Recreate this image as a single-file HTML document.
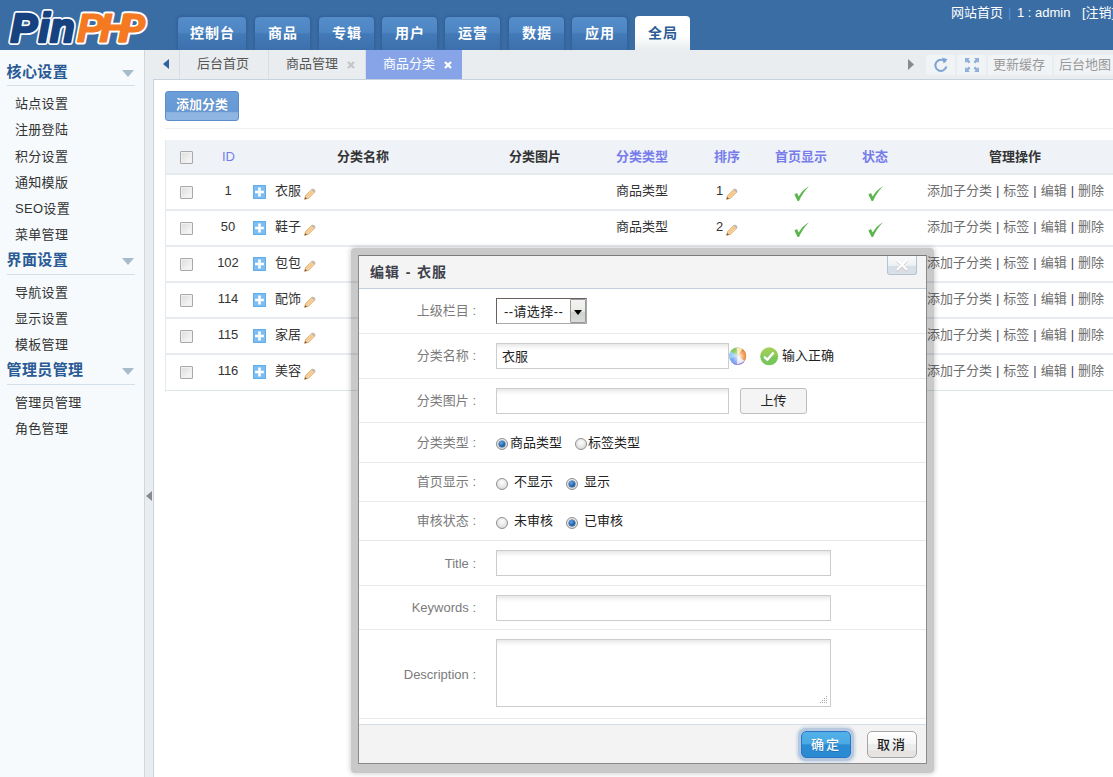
<!DOCTYPE html>
<html lang="zh-CN">
<head>
<meta charset="utf-8">
<title>PinPHP 管理后台</title>
<style>
*{box-sizing:border-box;margin:0;padding:0}
html,body{width:1113px;height:777px;overflow:hidden;background:#fff}
body{font-family:"Liberation Sans","Noto Sans CJK SC",sans-serif;font-size:13px;color:#333;position:relative}
.abs{position:absolute}
/* header */
#header{position:absolute;left:0;top:0;width:1113px;height:50px;background:#3a6da4}
#logo{position:absolute;left:0;top:0;width:160px;height:50px}
.nav{position:absolute;top:17px;height:33px;border-radius:4px 4px 0 0;background:linear-gradient(#548dca 0,#4e86c4 46%,#4279b7 52%,#3c70ad 100%);color:#fff;font-weight:bold;font-size:14px;letter-spacing:1px;padding-left:1px;line-height:33px;text-align:center;box-shadow:0 0 0 1px #34629c,0 0 3px 1px #2f5c95}
.nav.on{background:linear-gradient(#fff 0,#fff 55%,#e9edef 100%);color:#2b5b95;box-shadow:none;top:16px;height:34px;line-height:35px}
#topr{position:absolute;top:5px;left:951px;color:#fff;font-size:13px;line-height:16px;white-space:nowrap}
/* sidebar */
#side{position:absolute;left:0;top:50px;width:144px;height:727px;background:#f6fafc}
.sh{position:absolute;left:7px;width:128px;height:25px;border-bottom:1px solid #d5dfe8;color:#2a5a95;font-weight:bold;font-size:15px;line-height:22px;letter-spacing:.4px;text-indent:-.5px}
.sh i{position:absolute;right:1px;top:9px;width:0;height:0;border:6px solid transparent;border-top:7px solid #a6bcc8;border-bottom:0}
.si{position:absolute;left:15px;font-size:13px;line-height:18px;color:#333;white-space:nowrap;letter-spacing:.3px}
#split{position:absolute;left:144px;top:50px;width:10px;height:727px;background:#e9edef;border-left:1px solid #d2d7db;border-right:1px solid #c6d5e4}
#split i{position:absolute;left:1px;top:441px;width:0;height:0;border:5px solid transparent;border-right:6px solid #8a8a8a;border-left:0}
/* tabbar */
#tabbar{position:absolute;left:153px;top:50px;width:960px;height:30px;background:#e9edef;border-bottom:1px solid #c5d3e0}
.tb{position:absolute;top:0;height:29px;line-height:28px;font-size:13px;color:#555;border-right:1px solid #d7dee5;white-space:nowrap}
.tb.on{background:#86a4e7;color:#fff;border-right:0}

/* content */
#addbtn{position:absolute;left:165px;top:91px;width:74px;height:30px;border-radius:3px;background:linear-gradient(#6c9fd9 0,#6699d5 70%,#8fb5e2 74%,#8fb5e2 100%);border:1px solid #5b8ccb;color:#fff;font-weight:bold;font-size:13px;line-height:25px;text-align:center;text-shadow:0 0 1px #3c6aa8}
#hr1{position:absolute;left:165px;top:128px;width:948px;height:1px;background:#eef1f4}
#tbl{position:absolute;left:165px;top:140px;width:960px;height:252px;border-left:1px solid #e3e8ec}
#th{position:absolute;left:0;top:0;width:960px;height:35px;background:#eff3f8;border-bottom:2px solid #e6eaee}
.hc{position:absolute;top:8px;font-size:13px;line-height:18px;font-weight:bold;color:#333;white-space:nowrap}
.hc.l{color:#777cea}
.tr{position:absolute;left:0;width:960px;height:36px;border-bottom:2px solid #e8ecf0}
.tr>*{position:absolute}
.cb{left:14px;top:11px;width:13px;height:13px;border:1px solid #a9a9a9;border-radius:1px;background:linear-gradient(135deg,#dcdcdc,#fbfbfb);box-shadow:inset 0 0 0 1px #f0f0f0}
.id{left:41px;top:7px;width:42px;text-align:center;line-height:18px;font-size:13px;color:#333}
.pl{left:87px;top:10px}
.nm{left:109px;top:7px;line-height:18px;font-size:13px;white-space:nowrap}
.pc{top:13px}
.ty{left:450px;top:7px;line-height:18px;white-space:nowrap}
.od{left:550px;top:7px;line-height:18px}
.ck{top:11px}
.op{left:761px;top:7px;line-height:18px;color:#4b3f5e;white-space:nowrap;word-spacing:.35px}
.op b{font-weight:normal;color:#6e6e6e}

/* dialog */
#dlgwrap{position:absolute;left:351px;top:248px;width:583px;height:525px;background:rgba(0,0,0,.21);box-shadow:0 0 5px 1px rgba(0,0,0,.18);border-radius:4px}
#dlg{position:absolute;left:358px;top:255px;width:569px;height:509px;background:#fff;border:1px solid #8a8a8a;border-top-color:#7a7a7a}
#dt{position:absolute;left:0;top:0;width:567px;height:33px;background:#f4f4f4;border-bottom:1px solid #c3d1de;font-weight:bold;font-size:14px;letter-spacing:1px;line-height:33px;padding-left:11px;color:#3d414b;word-spacing:.8px}
#dx{position:absolute;left:528px;top:0;width:30px;height:19px;border:1px solid #b3c3d0;border-top:0;border-radius:0 0 3px 3px;background:linear-gradient(#f9f9f9 0,#eef1f4 52%,#d6dee7 58%,#dae1e9 100%)}
.fr{position:absolute;left:0;width:567px;border-bottom:1px solid #e6eaed}
.lb{position:absolute;left:0;width:117px;text-align:right;color:#7b7b7b;font-size:13px;line-height:18px;white-space:nowrap}
.in{position:absolute;left:137px;height:26px;border:1px solid #ccc;background:linear-gradient(#e7e7e7 0,#f5f5f5 3px,#fff 6px);font-size:13px;line-height:26px;padding-left:5px;color:#222}
.rd{position:absolute;width:12px;height:12px;border-radius:50%;border:1px solid #8f8f8f;background:radial-gradient(circle at 50% 35%,#fdfdfd 0,#e4e4e4 60%,#c9c9c9 100%)}
.rd.on:after{content:"";position:absolute;left:2px;top:2px;width:6px;height:6px;border-radius:50%;background:radial-gradient(circle at 40% 35%,#63a8ea 0,#1f62ad 55%,#0f3872 100%);box-shadow:0 0 0 .5px #1a4a88}
.rt{position:absolute;font-size:13px;line-height:18px;color:#222;white-space:nowrap}
#df{position:absolute;left:0;top:468px;width:567px;height:39px;background:#f3f3f3;border-top:1px solid #d5dde5}
.bt{position:absolute;top:6px;width:50px;height:27px;border-radius:5px;font-size:13px;line-height:25px;text-align:center;letter-spacing:2px}

.tl{position:absolute;top:5px;height:20px;background:#f1f4f6;font-size:13px;line-height:19px;color:#999;white-space:nowrap;overflow:hidden}
</style>
</head>
<body>
<div id="header">
  <svg id="logo" viewBox="0 0 160 50">
    <g font-family="Liberation Sans, sans-serif" font-weight="bold" font-style="italic" stroke-linejoin="round">
      <g fill="#fff" stroke="#fff">
        <g font-size="40" stroke-width="6"><text x="10.5" y="42">P</text><text x="38.5" y="42">i</text><text x="50" y="42">n</text></g>
        <g font-size="41" stroke-width="4.8"><text x="76.8" y="42.4">P</text><text transform="translate(99 42.4) scale(1.08 1)">H</text><text x="117.7" y="42.4">P</text></g>
      </g>
      <g fill="#16437f" stroke="#16437f" stroke-width="2.6" font-size="40">
        <text x="10.5" y="42">P</text><text x="38.5" y="42">i</text><text x="50" y="42">n</text>
      </g>
      <g fill="#f47920" stroke="#f47920" stroke-width="1.2" font-size="41">
        <text x="76.8" y="42.4">P</text><text transform="translate(99 42.4) scale(1.08 1)">H</text><text x="117.7" y="42.4">P</text>
      </g>
    </g>
  </svg>
  <div class="nav" style="left:178px;width:68px">控制台</div>
  <div class="nav" style="left:255px;width:55px">商品</div>
  <div class="nav" style="left:319px;width:55px">专辑</div>
  <div class="nav" style="left:382px;width:55px">用户</div>
  <div class="nav" style="left:445px;width:55px">运营</div>
  <div class="nav" style="left:509px;width:55px">数据</div>
  <div class="nav" style="left:572px;width:55px">应用</div>
  <div class="nav on" style="left:635px;width:55px">全局</div>
  <div id="topr"><span class="abs" style="left:0">网站首页</span><span class="abs" style="left:57px;color:#4f8fd6">|</span><span class="abs" style="left:66px">1 : admin</span><span class="abs" style="left:131px">[注销]</span></div>
</div>

<div id="side">
  <div class="sh" style="top:11px">核心设置<i></i></div>
  <div class="si" style="top:45px">站点设置</div>
  <div class="si" style="top:71px">注册登陆</div>
  <div class="si" style="top:98px">积分设置</div>
  <div class="si" style="top:124px">通知模版</div>
  <div class="si" style="top:150px">SEO设置</div>
  <div class="si" style="top:176px">菜单管理</div>
  <div class="sh" style="top:199px;height:26px">界面设置<i></i></div>
  <div class="si" style="top:234px">导航设置</div>
  <div class="si" style="top:260px">显示设置</div>
  <div class="si" style="top:286px">模板管理</div>
  <div class="sh" style="top:309px;height:26px">管理员管理<i></i></div>
  <div class="si" style="top:344px">管理员管理</div>
  <div class="si" style="top:370px">角色管理</div>
</div>
<div id="split"><i></i></div>

<div id="tabbar">
  <svg class="abs" style="left:9px;top:8px" width="8" height="12" viewBox="0 0 8 12"><path d="M7 1 L1 6 L7 11 Z" fill="#2f62a3"/></svg>
  <div class="tb" style="left:0;width:27px"></div>
  <div class="tb" style="left:27px;width:89px;padding-left:17px">后台首页</div>
  <div class="tb" style="left:116px;width:97px;padding-left:17px">商品管理<svg class="abs" style="left:78px;top:11px" width="8" height="8" viewBox="0 0 8 8"><path d="M1 1 L7 7 M7 1 L1 7" stroke="#c3c7cb" stroke-width="2.3"/></svg></div>
  <div class="tb on" style="left:213px;width:96px;padding-left:17px">商品分类<svg class="abs" style="left:78px;top:11px" width="8" height="8" viewBox="0 0 8 8"><path d="M1 1 L7 7 M7 1 L1 7" stroke="#fff" stroke-width="2.3"/></svg></div>
  <svg class="abs" style="left:755px;top:9px" width="6" height="11" viewBox="0 0 6 11"><path d="M0 0 L6 5.5 L0 11 Z" fill="#8a8a8a"/></svg>
  <div class="tl" style="left:773px;width:29px;border-radius:3px 0 0 3px"><svg class="abs" style="left:7px;top:2px" width="16" height="16" viewBox="0 0 16 16"><path d="M12.6 5.2 A5.6 5.6 0 1 0 13.4 9.6" fill="none" stroke="#7fa6d3" stroke-width="2.1"/><path d="M9.2 0.6 L14.6 2.2 L10.6 6.4 Z" fill="#7fa6d3"/></svg></div>
  <div class="tl" style="left:804px;width:29px"><svg class="abs" style="left:8px;top:3px" width="14" height="14" viewBox="0 0 14 14"><g fill="#8fb0d8"><path d="M0 0h5L3.4 1.6 5.5 3.7 3.7 5.5 1.6 3.4 0 5z"/><path d="M14 0v5l-1.6-1.6-2.1 2.1-1.8-1.8 2.1-2.1L9 0z"/><path d="M0 14V9l1.6 1.6 2.1-2.1 1.8 1.8-2.1 2.1L5 14z"/><path d="M14 14H9l1.6-1.6-2.1-2.1 1.8-1.8 2.1 2.1L14 9z"/></g></svg></div>
  <div class="tl" style="left:835px;width:64px;padding-left:5px">更新缓存</div>
  <div class="tl" style="left:901px;width:60px;padding-left:5px">后台地图</div>
</div>
<div id="addbtn">添加分类</div>
<div id="hr1"></div>
<div id="tbl">
 <div id="th">
  <span class="cb abs"></span>
  <span class="hc l" style="left:56px;font-weight:normal">ID</span>
  <span class="hc" style="left:171px">分类名称</span>
  <span class="hc" style="left:343px">分类图片</span>
  <span class="hc l" style="left:450px">分类类型</span>
  <span class="hc l" style="left:548px">排序</span>
  <span class="hc l" style="left:609px">首页显示</span>
  <span class="hc l" style="left:696px">状态</span>
  <span class="hc" style="left:823px">管理操作</span>
 </div>
 <div class="tr" style="top:35px"><span class="cb"></span><span class="id">1</span><svg class="pl" width="13" height="14" viewBox="0 0 13 14"><rect width="13" height="14" fill="#7dbdf1"/><rect x="0.5" y="0.5" width="12" height="13" fill="none" stroke="#5faeea"/><path d="M6.5 2.6v8.8M2.1 7h8.8" stroke="#fff" stroke-width="2.6"/></svg><span class="nm">衣服</span><svg class="pc" style="left:138px" width="12" height="12" viewBox="0 0 12 12"><path d="M0.6 11.2 L1.6 7.6 L8.2 1 L11 3.8 L4.4 10.4 Z" fill="#f8d6a4" stroke="#dfa968" stroke-width="0.9" stroke-linejoin="round"/><path d="M2.6 9.2 L9 2.8" stroke="#eebb7c" stroke-width="1"/><path d="M7.6 1.6 L10.4 4.4 L11.3 3.3 Q11.6 2.6 10.6 1.5 Q9.5 0.5 8.7 0.7 Z" fill="#b9b9b9"/><path d="M0.5 11.4 L1.2 9 L3 10.8 Z" fill="#6b5a48"/></svg><span class="ty">商品类型</span><span class="od">1</span><svg class="pc" style="left:560px" width="12" height="12" viewBox="0 0 12 12"><path d="M0.6 11.2 L1.6 7.6 L8.2 1 L11 3.8 L4.4 10.4 Z" fill="#f8d6a4" stroke="#dfa968" stroke-width="0.9" stroke-linejoin="round"/><path d="M2.6 9.2 L9 2.8" stroke="#eebb7c" stroke-width="1"/><path d="M7.6 1.6 L10.4 4.4 L11.3 3.3 Q11.6 2.6 10.6 1.5 Q9.5 0.5 8.7 0.7 Z" fill="#b9b9b9"/><path d="M0.5 11.4 L1.2 9 L3 10.8 Z" fill="#6b5a48"/></svg><svg class="ck" style="left:628px" width="16" height="16" viewBox="0 0 16 16"><path d="M0.4 8.6 L3 6.9 L4.7 10.6 Q8.6 3.6 15 0.2 Q8.4 7 5 15 L3.6 15 Z" fill="#5bb54d"/></svg><svg class="ck" style="left:702px" width="16" height="16" viewBox="0 0 16 16"><path d="M0.4 8.6 L3 6.9 L4.7 10.6 Q8.6 3.6 15 0.2 Q8.4 7 5 15 L3.6 15 Z" fill="#5bb54d"/></svg><span class="op"><b>添加子分类</b> | <b>标签</b> | <b>编辑</b> | <b>删除</b></span></div>
 <div class="tr" style="top:71px"><span class="cb"></span><span class="id">50</span><svg class="pl" width="13" height="14" viewBox="0 0 13 14"><rect width="13" height="14" fill="#7dbdf1"/><rect x="0.5" y="0.5" width="12" height="13" fill="none" stroke="#5faeea"/><path d="M6.5 2.6v8.8M2.1 7h8.8" stroke="#fff" stroke-width="2.6"/></svg><span class="nm">鞋子</span><svg class="pc" style="left:138px" width="12" height="12" viewBox="0 0 12 12"><path d="M0.6 11.2 L1.6 7.6 L8.2 1 L11 3.8 L4.4 10.4 Z" fill="#f8d6a4" stroke="#dfa968" stroke-width="0.9" stroke-linejoin="round"/><path d="M2.6 9.2 L9 2.8" stroke="#eebb7c" stroke-width="1"/><path d="M7.6 1.6 L10.4 4.4 L11.3 3.3 Q11.6 2.6 10.6 1.5 Q9.5 0.5 8.7 0.7 Z" fill="#b9b9b9"/><path d="M0.5 11.4 L1.2 9 L3 10.8 Z" fill="#6b5a48"/></svg><span class="ty">商品类型</span><span class="od">2</span><svg class="pc" style="left:560px" width="12" height="12" viewBox="0 0 12 12"><path d="M0.6 11.2 L1.6 7.6 L8.2 1 L11 3.8 L4.4 10.4 Z" fill="#f8d6a4" stroke="#dfa968" stroke-width="0.9" stroke-linejoin="round"/><path d="M2.6 9.2 L9 2.8" stroke="#eebb7c" stroke-width="1"/><path d="M7.6 1.6 L10.4 4.4 L11.3 3.3 Q11.6 2.6 10.6 1.5 Q9.5 0.5 8.7 0.7 Z" fill="#b9b9b9"/><path d="M0.5 11.4 L1.2 9 L3 10.8 Z" fill="#6b5a48"/></svg><svg class="ck" style="left:628px" width="16" height="16" viewBox="0 0 16 16"><path d="M0.4 8.6 L3 6.9 L4.7 10.6 Q8.6 3.6 15 0.2 Q8.4 7 5 15 L3.6 15 Z" fill="#5bb54d"/></svg><svg class="ck" style="left:702px" width="16" height="16" viewBox="0 0 16 16"><path d="M0.4 8.6 L3 6.9 L4.7 10.6 Q8.6 3.6 15 0.2 Q8.4 7 5 15 L3.6 15 Z" fill="#5bb54d"/></svg><span class="op"><b>添加子分类</b> | <b>标签</b> | <b>编辑</b> | <b>删除</b></span></div>
 <div class="tr" style="top:107px"><span class="cb"></span><span class="id">102</span><svg class="pl" width="13" height="14" viewBox="0 0 13 14"><rect width="13" height="14" fill="#7dbdf1"/><rect x="0.5" y="0.5" width="12" height="13" fill="none" stroke="#5faeea"/><path d="M6.5 2.6v8.8M2.1 7h8.8" stroke="#fff" stroke-width="2.6"/></svg><span class="nm">包包</span><svg class="pc" style="left:138px" width="12" height="12" viewBox="0 0 12 12"><path d="M0.6 11.2 L1.6 7.6 L8.2 1 L11 3.8 L4.4 10.4 Z" fill="#f8d6a4" stroke="#dfa968" stroke-width="0.9" stroke-linejoin="round"/><path d="M2.6 9.2 L9 2.8" stroke="#eebb7c" stroke-width="1"/><path d="M7.6 1.6 L10.4 4.4 L11.3 3.3 Q11.6 2.6 10.6 1.5 Q9.5 0.5 8.7 0.7 Z" fill="#b9b9b9"/><path d="M0.5 11.4 L1.2 9 L3 10.8 Z" fill="#6b5a48"/></svg><span class="ty">商品类型</span><span class="od">3</span><svg class="pc" style="left:560px" width="12" height="12" viewBox="0 0 12 12"><path d="M0.6 11.2 L1.6 7.6 L8.2 1 L11 3.8 L4.4 10.4 Z" fill="#f8d6a4" stroke="#dfa968" stroke-width="0.9" stroke-linejoin="round"/><path d="M2.6 9.2 L9 2.8" stroke="#eebb7c" stroke-width="1"/><path d="M7.6 1.6 L10.4 4.4 L11.3 3.3 Q11.6 2.6 10.6 1.5 Q9.5 0.5 8.7 0.7 Z" fill="#b9b9b9"/><path d="M0.5 11.4 L1.2 9 L3 10.8 Z" fill="#6b5a48"/></svg><svg class="ck" style="left:628px" width="16" height="16" viewBox="0 0 16 16"><path d="M0.4 8.6 L3 6.9 L4.7 10.6 Q8.6 3.6 15 0.2 Q8.4 7 5 15 L3.6 15 Z" fill="#5bb54d"/></svg><svg class="ck" style="left:702px" width="16" height="16" viewBox="0 0 16 16"><path d="M0.4 8.6 L3 6.9 L4.7 10.6 Q8.6 3.6 15 0.2 Q8.4 7 5 15 L3.6 15 Z" fill="#5bb54d"/></svg><span class="op"><b>添加子分类</b> | <b>标签</b> | <b>编辑</b> | <b>删除</b></span></div>
 <div class="tr" style="top:143px"><span class="cb"></span><span class="id">114</span><svg class="pl" width="13" height="14" viewBox="0 0 13 14"><rect width="13" height="14" fill="#7dbdf1"/><rect x="0.5" y="0.5" width="12" height="13" fill="none" stroke="#5faeea"/><path d="M6.5 2.6v8.8M2.1 7h8.8" stroke="#fff" stroke-width="2.6"/></svg><span class="nm">配饰</span><svg class="pc" style="left:138px" width="12" height="12" viewBox="0 0 12 12"><path d="M0.6 11.2 L1.6 7.6 L8.2 1 L11 3.8 L4.4 10.4 Z" fill="#f8d6a4" stroke="#dfa968" stroke-width="0.9" stroke-linejoin="round"/><path d="M2.6 9.2 L9 2.8" stroke="#eebb7c" stroke-width="1"/><path d="M7.6 1.6 L10.4 4.4 L11.3 3.3 Q11.6 2.6 10.6 1.5 Q9.5 0.5 8.7 0.7 Z" fill="#b9b9b9"/><path d="M0.5 11.4 L1.2 9 L3 10.8 Z" fill="#6b5a48"/></svg><span class="ty">商品类型</span><span class="od">4</span><svg class="pc" style="left:560px" width="12" height="12" viewBox="0 0 12 12"><path d="M0.6 11.2 L1.6 7.6 L8.2 1 L11 3.8 L4.4 10.4 Z" fill="#f8d6a4" stroke="#dfa968" stroke-width="0.9" stroke-linejoin="round"/><path d="M2.6 9.2 L9 2.8" stroke="#eebb7c" stroke-width="1"/><path d="M7.6 1.6 L10.4 4.4 L11.3 3.3 Q11.6 2.6 10.6 1.5 Q9.5 0.5 8.7 0.7 Z" fill="#b9b9b9"/><path d="M0.5 11.4 L1.2 9 L3 10.8 Z" fill="#6b5a48"/></svg><svg class="ck" style="left:628px" width="16" height="16" viewBox="0 0 16 16"><path d="M0.4 8.6 L3 6.9 L4.7 10.6 Q8.6 3.6 15 0.2 Q8.4 7 5 15 L3.6 15 Z" fill="#5bb54d"/></svg><svg class="ck" style="left:702px" width="16" height="16" viewBox="0 0 16 16"><path d="M0.4 8.6 L3 6.9 L4.7 10.6 Q8.6 3.6 15 0.2 Q8.4 7 5 15 L3.6 15 Z" fill="#5bb54d"/></svg><span class="op"><b>添加子分类</b> | <b>标签</b> | <b>编辑</b> | <b>删除</b></span></div>
 <div class="tr" style="top:179px"><span class="cb"></span><span class="id">115</span><svg class="pl" width="13" height="14" viewBox="0 0 13 14"><rect width="13" height="14" fill="#7dbdf1"/><rect x="0.5" y="0.5" width="12" height="13" fill="none" stroke="#5faeea"/><path d="M6.5 2.6v8.8M2.1 7h8.8" stroke="#fff" stroke-width="2.6"/></svg><span class="nm">家居</span><svg class="pc" style="left:138px" width="12" height="12" viewBox="0 0 12 12"><path d="M0.6 11.2 L1.6 7.6 L8.2 1 L11 3.8 L4.4 10.4 Z" fill="#f8d6a4" stroke="#dfa968" stroke-width="0.9" stroke-linejoin="round"/><path d="M2.6 9.2 L9 2.8" stroke="#eebb7c" stroke-width="1"/><path d="M7.6 1.6 L10.4 4.4 L11.3 3.3 Q11.6 2.6 10.6 1.5 Q9.5 0.5 8.7 0.7 Z" fill="#b9b9b9"/><path d="M0.5 11.4 L1.2 9 L3 10.8 Z" fill="#6b5a48"/></svg><span class="ty">商品类型</span><span class="od">5</span><svg class="pc" style="left:560px" width="12" height="12" viewBox="0 0 12 12"><path d="M0.6 11.2 L1.6 7.6 L8.2 1 L11 3.8 L4.4 10.4 Z" fill="#f8d6a4" stroke="#dfa968" stroke-width="0.9" stroke-linejoin="round"/><path d="M2.6 9.2 L9 2.8" stroke="#eebb7c" stroke-width="1"/><path d="M7.6 1.6 L10.4 4.4 L11.3 3.3 Q11.6 2.6 10.6 1.5 Q9.5 0.5 8.7 0.7 Z" fill="#b9b9b9"/><path d="M0.5 11.4 L1.2 9 L3 10.8 Z" fill="#6b5a48"/></svg><svg class="ck" style="left:628px" width="16" height="16" viewBox="0 0 16 16"><path d="M0.4 8.6 L3 6.9 L4.7 10.6 Q8.6 3.6 15 0.2 Q8.4 7 5 15 L3.6 15 Z" fill="#5bb54d"/></svg><svg class="ck" style="left:702px" width="16" height="16" viewBox="0 0 16 16"><path d="M0.4 8.6 L3 6.9 L4.7 10.6 Q8.6 3.6 15 0.2 Q8.4 7 5 15 L3.6 15 Z" fill="#5bb54d"/></svg><span class="op"><b>添加子分类</b> | <b>标签</b> | <b>编辑</b> | <b>删除</b></span></div>
 <div class="tr" style="top:215px;border-bottom:1px solid #dfe6ea"><span class="cb"></span><span class="id">116</span><svg class="pl" width="13" height="14" viewBox="0 0 13 14"><rect width="13" height="14" fill="#7dbdf1"/><rect x="0.5" y="0.5" width="12" height="13" fill="none" stroke="#5faeea"/><path d="M6.5 2.6v8.8M2.1 7h8.8" stroke="#fff" stroke-width="2.6"/></svg><span class="nm">美容</span><svg class="pc" style="left:138px" width="12" height="12" viewBox="0 0 12 12"><path d="M0.6 11.2 L1.6 7.6 L8.2 1 L11 3.8 L4.4 10.4 Z" fill="#f8d6a4" stroke="#dfa968" stroke-width="0.9" stroke-linejoin="round"/><path d="M2.6 9.2 L9 2.8" stroke="#eebb7c" stroke-width="1"/><path d="M7.6 1.6 L10.4 4.4 L11.3 3.3 Q11.6 2.6 10.6 1.5 Q9.5 0.5 8.7 0.7 Z" fill="#b9b9b9"/><path d="M0.5 11.4 L1.2 9 L3 10.8 Z" fill="#6b5a48"/></svg><span class="ty">商品类型</span><span class="od">6</span><svg class="pc" style="left:560px" width="12" height="12" viewBox="0 0 12 12"><path d="M0.6 11.2 L1.6 7.6 L8.2 1 L11 3.8 L4.4 10.4 Z" fill="#f8d6a4" stroke="#dfa968" stroke-width="0.9" stroke-linejoin="round"/><path d="M2.6 9.2 L9 2.8" stroke="#eebb7c" stroke-width="1"/><path d="M7.6 1.6 L10.4 4.4 L11.3 3.3 Q11.6 2.6 10.6 1.5 Q9.5 0.5 8.7 0.7 Z" fill="#b9b9b9"/><path d="M0.5 11.4 L1.2 9 L3 10.8 Z" fill="#6b5a48"/></svg><svg class="ck" style="left:628px" width="16" height="16" viewBox="0 0 16 16"><path d="M0.4 8.6 L3 6.9 L4.7 10.6 Q8.6 3.6 15 0.2 Q8.4 7 5 15 L3.6 15 Z" fill="#5bb54d"/></svg><svg class="ck" style="left:702px" width="16" height="16" viewBox="0 0 16 16"><path d="M0.4 8.6 L3 6.9 L4.7 10.6 Q8.6 3.6 15 0.2 Q8.4 7 5 15 L3.6 15 Z" fill="#5bb54d"/></svg><span class="op"><b>添加子分类</b> | <b>标签</b> | <b>编辑</b> | <b>删除</b></span></div>
</div>
<div id="dlgwrap"></div>
<div id="dlg">
 <div id="dt">编辑 - 衣服
  <div id="dx"><svg class="abs" style="left:7px;top:2px" width="14" height="14" viewBox="0 0 14 14"><path d="M2 3 L12 13 M12 3 L2 13" stroke="#c9b9b9" stroke-width="2.2" opacity=".7"/><path d="M2 2 L12 12 M12 2 L2 12" stroke="#fff" stroke-width="2"/></svg></div>
 </div>
 <div class="fr" style="top:33px;height:45px">
  <span class="lb" style="top:13px">上级栏目 :</span>
  <div class="abs" style="left:137px;top:9px;width:91px;height:26px;border:1px solid #a9a9a9;border-top-color:#6e5f5f;border-left-color:#6e5f5f;background:#fff;font-size:13px;line-height:26px;padding-left:7px;color:#222;white-space:nowrap;letter-spacing:.4px">--请选择--
   <span class="abs" style="left:73px;top:0;width:16px;height:24px;border:1px solid #9a9a9a;border-radius:1px;background:linear-gradient(#f4f4f4 0,#e9ece6 50%,#cfd3cf 55%,#d8dbd8 100%)"><i class="abs" style="left:3px;top:10px;width:0;height:0;border:4px solid transparent;border-top:5px solid #000;border-bottom:0"></i></span>
  </div>
 </div>
 <div class="fr" style="top:78px;height:45px">
  <span class="lb" style="top:13px">分类名称 :</span>
  <div class="in" style="top:9px;width:233px">衣服</div>
  <svg class="abs" style="left:370px;top:13px" width="18" height="19" viewBox="0 0 18 19"><defs><radialGradient id="gw" cx="58%" cy="52%" r="50%"><stop offset="0" stop-color="#fff" stop-opacity=".95"/><stop offset="0.4" stop-color="#fff" stop-opacity=".45"/><stop offset="0.85" stop-color="#fff" stop-opacity="0"/></radialGradient><clipPath id="gc"><ellipse cx="8.7" cy="9.1" rx="8.6" ry="9"/></clipPath></defs><g clip-path="url(#gc)"><ellipse cx="8.7" cy="9.1" rx="8.6" ry="9" fill="#8fb6f3"/><path d="M8.7 9.1 L13.36 1.64 A8.8 8.8 0 0 1 15.91 14.15 Z" fill="#f08228"/><path d="M8.7 9.1 L7.17 0.43 A8.8 8.8 0 0 1 13.36 1.64 Z" fill="#fbe9a8"/><path d="M8.7 9.1 L0.20 6.82 A8.8 8.8 0 0 1 7.17 0.43 Z" fill="#8ccb5e"/><path d="M8.7 9.1 L0.43 12.11 A8.8 8.8 0 0 1 0.20 6.82 Z" fill="#8fb0d6"/><path d="M8.7 9.1 L0.43 12.11 A8.8 8.8 0 0 1 1.49 4.05 Z" fill="#9ccdf8"/><path d="M8.7 9.1 L7.93 17.87 A8.8 8.8 0 0 1 0.43 12.11 Z" fill="#7ea6f4"/><path d="M8.7 9.1 L15.91 14.15 A8.8 8.8 0 0 1 7.93 17.87 Z" fill="#e9e6ee"/><ellipse cx="8.7" cy="9.1" rx="8.6" ry="9" fill="url(#gw)"/><path d="M2.5 15.8 Q8.7 20.5 15.5 14.6" fill="none" stroke="#8b72d8" stroke-width="1.3" opacity=".8"/></g></svg>
  <svg class="abs" style="left:401px;top:13px" width="19" height="19" viewBox="0 0 19 19"><defs><linearGradient id="gg" x1="0" y1="0" x2="0" y2="1"><stop offset="0" stop-color="#a6d05a"/><stop offset="0.45" stop-color="#8fcb58"/><stop offset="0.55" stop-color="#78c856"/><stop offset="1" stop-color="#74c85a"/></linearGradient></defs><circle cx="9.2" cy="9.3" r="9" fill="url(#gg)"/><path d="M4 9.6 L7.4 12.6 L13.6 5.4" fill="none" stroke="#bcbcbc" stroke-width="2.3" transform="translate(0,0.8)" opacity=".6"/><path d="M4 9.6 L7.4 12.6 L13.6 5.4" fill="none" stroke="#fff" stroke-width="2.3"/></svg>
  <span class="rt" style="left:423px;top:13px">输入正确</span>
 </div>
 <div class="fr" style="top:123px;height:44px">
  <span class="lb" style="top:13px">分类图片 :</span>
  <div class="in" style="top:9px;width:233px"></div>
  <div class="abs" style="left:381px;top:9px;width:67px;height:26px;border:1px solid #bdbdbd;border-radius:3px;background:#f4f4f4;font-size:13px;line-height:24px;text-align:center;color:#222">上传</div>
 </div>
 <div class="fr" style="top:167px;height:40px">
  <span class="lb" style="top:11px">分类类型 :</span>
  <span class="rd on" style="left:137px;top:15px"></span><span class="rt" style="left:151px;top:11px">商品类型</span>
  <span class="rd" style="left:216px;top:15px"></span><span class="rt" style="left:229px;top:11px">标签类型</span>
 </div>
 <div class="fr" style="top:207px;height:39px">
  <span class="lb" style="top:10px">首页显示 :</span>
  <span class="rd" style="left:137px;top:15px"></span><span class="rt" style="left:155px;top:10px">不显示</span>
  <span class="rd on" style="left:207px;top:15px"></span><span class="rt" style="left:225px;top:10px">显示</span>
 </div>
 <div class="fr" style="top:246px;height:39px">
  <span class="lb" style="top:10px">审核状态 :</span>
  <span class="rd" style="left:137px;top:15px"></span><span class="rt" style="left:155px;top:10px">未审核</span>
  <span class="rd on" style="left:207px;top:15px"></span><span class="rt" style="left:225px;top:10px">已审核</span>
 </div>
 <div class="fr" style="top:285px;height:45px">
  <span class="lb" style="top:14px">Title :</span>
  <div class="in" style="top:9px;width:335px"></div>
 </div>
 <div class="fr" style="top:330px;height:44px">
  <span class="lb" style="top:13px">Keywords :</span>
  <div class="in" style="top:9px;width:335px"></div>
 </div>
 <div class="fr" style="top:374px;height:89px">
  <span class="lb" style="top:36px">Description :</span>
  <div class="in" style="top:9px;width:335px;height:68px"><svg class="abs" style="right:2px;bottom:2px" width="8" height="8" viewBox="0 0 8 8"><g fill="#aaa"><rect x="6" y="0" width="1" height="1"/><rect x="6" y="2" width="1" height="1"/><rect x="4" y="2" width="1" height="1"/><rect x="6" y="4" width="1" height="1"/><rect x="4" y="4" width="1" height="1"/><rect x="2" y="4" width="1" height="1"/><rect x="6" y="6" width="1" height="1"/><rect x="4" y="6" width="1" height="1"/><rect x="2" y="6" width="1" height="1"/><rect x="0" y="6" width="1" height="1"/></g></svg></div>
 </div>
 <div id="df">
  <div class="bt" style="left:442px;background:linear-gradient(#52b1e8 0,#4ba9e3 46%,#2a8bd3 52%,#2a8bd3 100%);border:1px solid #2c74c4;color:#fff;font-weight:500;text-shadow:0 1px 0 rgba(20,70,130,.4);box-shadow:0 0 0 3px rgba(170,192,220,.75),0 0 2px 5px rgba(170,192,220,.4)">确定</div>
  <div class="bt" style="left:508px;background:linear-gradient(#fff 0,#f6f6f6 46%,#eceeee 50%,#ebebeb 72%,#e6e2e0 78%,#e8e4e2 100%);border:1px solid #a5a5a5;color:#222;font-weight:500">取消</div>
 </div>
</div>

</body>
</html>
